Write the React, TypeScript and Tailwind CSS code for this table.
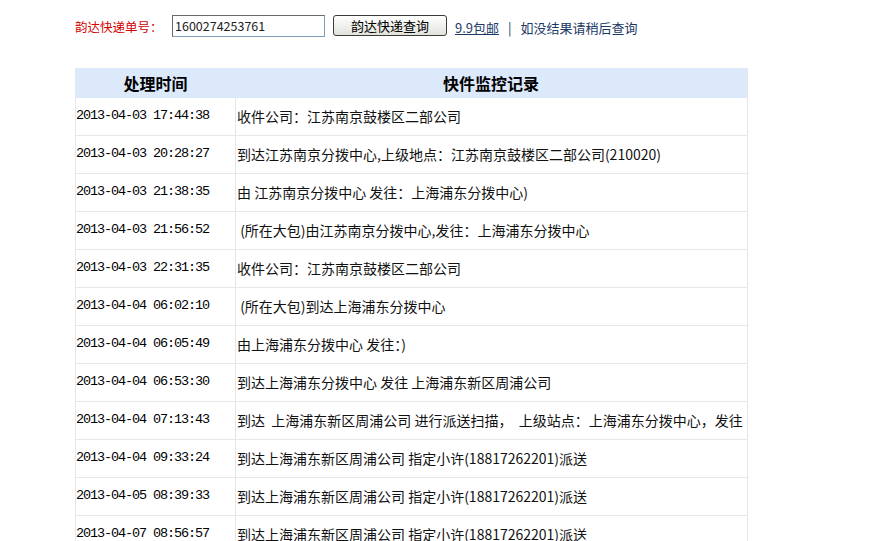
import React from 'react';

const records: [string, string][] = [
  ['2013-04-03 17:44:38', '收件公司：江苏南京鼓楼区二部公司'],
  ['2013-04-03 20:28:27', '到达江苏南京分拨中心,上级地点：江苏南京鼓楼区二部公司(210020)'],
  ['2013-04-03 21:38:35', '由 江苏南京分拨中心 发往：上海浦东分拨中心)'],
  ['2013-04-03 21:56:52', ' (所在大包)由江苏南京分拨中心,发往：上海浦东分拨中心'],
  ['2013-04-03 22:31:35', '收件公司：江苏南京鼓楼区二部公司'],
  ['2013-04-04 06:02:10', ' (所在大包)到达上海浦东分拨中心'],
  ['2013-04-04 06:05:49', '由上海浦东分拨中心 发往：)'],
  ['2013-04-04 06:53:30', '到达上海浦东分拨中心 发往 上海浦东新区周浦公司'],
  ['2013-04-04 07:13:43', '到达  上海浦东新区周浦公司 进行派送扫描，  上级站点：上海浦东分拨中心，发往'],
  ['2013-04-04 09:33:24', '到达上海浦东新区周浦公司 指定小许(18817262201)派送'],
  ['2013-04-05 08:39:33', '到达上海浦东新区周浦公司 指定小许(18817262201)派送'],
  ['2013-04-07 08:56:57', '到达上海浦东新区周浦公司 指定小许(18817262201)派送'],
];

export default function App() {
  return (
    <div className="min-h-screen bg-white pl-[75px] pt-[14px] font-['Noto_Sans_CJK_SC',sans-serif] text-black">
      {/* 查询栏 */}
      <div className="flex items-center h-[23px] text-[13px] leading-none">
        <span className="w-[97px] pt-[3px] text-[#d40000] text-[12.5px]">韵达快递单号：</span>
        <input
          type="text"
          defaultValue="1600274253761"
          className="w-[153px] h-[22px] px-[2px] border border-[#7f9db9] border-t-[#6a6a6a] border-l-[#6a6a6a] text-[12.5px] text-[#222] outline-none"
        />
        <button className="ml-[8px] w-[114px] h-[21px] rounded-[3px] border border-[#3c3c3c] bg-gradient-to-b from-white to-[#e2e2dc] text-[13px]">
          韵达快递查询
        </button>
        <a href="#" className="ml-[8px] pt-[3px] text-[#1b3a66] underline">9.9包邮</a>
        <span className="ml-[9px] pt-[3px] text-[#1b3a66]">|</span>
        <span className="ml-[9px] pt-[3px] text-[#1b3a66]">如没结果请稍后查询</span>
      </div>

      {/* 记录表 */}
      <div className="mt-[31px] w-[673px] border-x border-[#e6e6e6]">
        <div className="flex h-[30px] items-center bg-[#dce9fb] text-[16px] font-bold">
          <div className="w-[159px] text-center">处理时间</div>
          <div className="flex-1 text-center">快件监控记录</div>
        </div>
        {records.map(([time, text], i) => (
          <div key={i} className="flex h-[38px] border-b border-[#e8e8e8]">
            <div className="w-[160px] flex items-center border-r border-[#e6e6e6] font-['Liberation_Mono',monospace] text-[13.5px] tracking-[-1.1px]">
              {time}
            </div>
            <div className="flex-1 flex items-center pl-[1px] overflow-hidden whitespace-pre text-[14px] text-[#111]">
              {text}
            </div>
          </div>
        ))}
      </div>
    </div>
  );
}
